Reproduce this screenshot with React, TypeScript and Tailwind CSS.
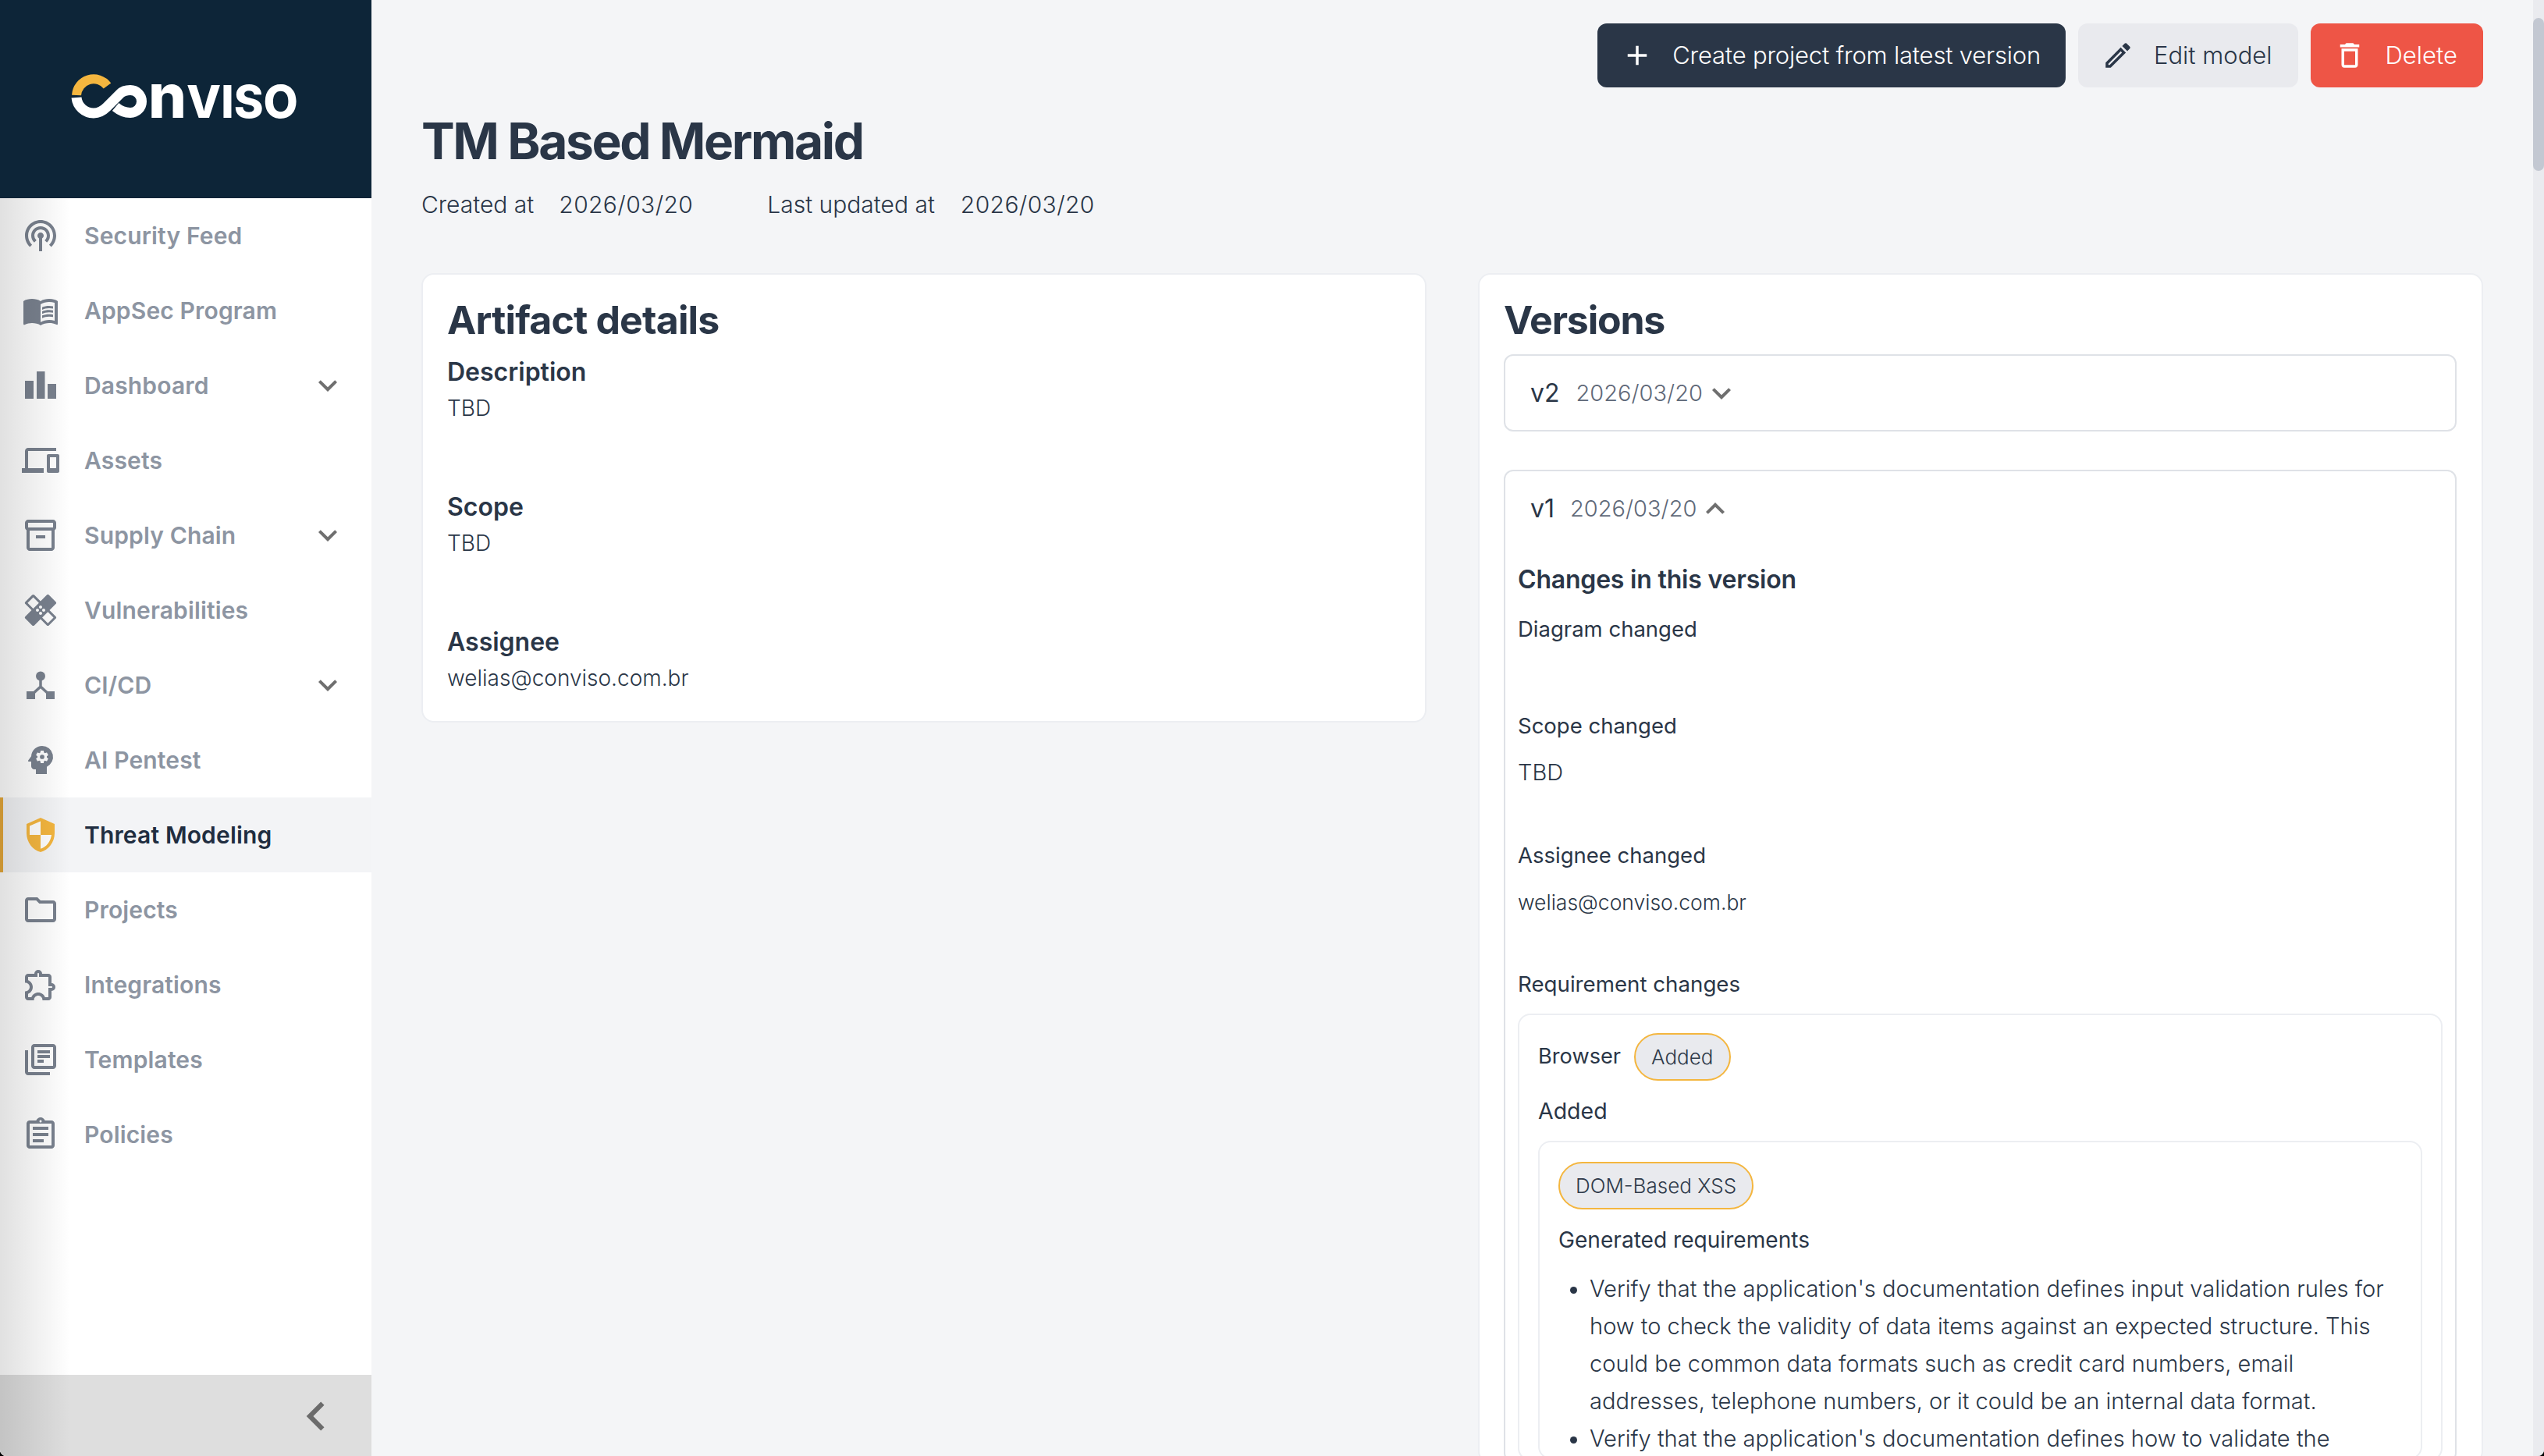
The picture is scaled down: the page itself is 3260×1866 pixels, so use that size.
import type { ReactNode } from 'react'
import {
  MdAdd, MdChevronLeft, MdExpandLess, MdExpandMore, MdHealing, MdMenuBook,
  MdOutlineAssignment, MdOutlineDelete, MdOutlineDevices, MdOutlineEdit,
  MdOutlineExtension, MdOutlineFolder, MdOutlineInventory2, MdOutlineLibraryBooks, MdPodcasts, MdPsychology,
} from 'react-icons/md'

function PipelineIcon() {
  return (
    <svg width={48} height={48} viewBox="0 0 48 48" fill="currentColor">
      <circle cx="24" cy="12.5" r="6" />
      <rect x="6" y="32" width="11" height="10" />
      <rect x="31" y="32" width="11" height="10" />
      <path d="M24 18v8M24 26 12 37M24 26l12 11" stroke="currentColor" strokeWidth="3.5" fill="none" />
    </svg>
  )
}

function BarsIcon() {
  return (
    <svg width={48} height={48} viewBox="0 0 48 48" fill="currentColor">
      <rect x="4" y="18" width="11" height="23" />
      <rect x="19" y="6" width="10.5" height="35" />
      <rect x="33" y="22" width="11" height="19" />
    </svg>
  )
}

function ShieldIcon() {
  return (
    <svg width={48} height={48} viewBox="0 0 24 24">
      <path d="M12 1 3 5v6c0 5.55 3.84 10.74 9 12 5.16-1.26 9-6.45 9-12V5z" fill="#fff" />
      <path
        d="M12 1 3 5v6c0 5.55 3.84 10.74 9 12 5.16-1.26 9-6.45 9-12V5l-9-4zm0 10.99h7c-.53 4.12-3.28 7.79-7 8.94V12H5V6.3l7-3.11v8.8z"
        fill="#f4b63f"
      />
    </svg>
  )
}

const NAV_ITEMS: { label: string; icon: ReactNode; caret?: boolean; active?: boolean }[] = [
  { label: 'Security Feed', icon: <MdPodcasts size={48} /> },
  { label: 'AppSec Program', icon: <MdMenuBook size={48} /> },
  { label: 'Dashboard', icon: <BarsIcon />, caret: true },
  { label: 'Assets', icon: <MdOutlineDevices size={48} /> },
  { label: 'Supply Chain', icon: <MdOutlineInventory2 size={48} />, caret: true },
  { label: 'Vulnerabilities', icon: <MdHealing size={48} /> },
  { label: 'CI/CD', icon: <PipelineIcon />, caret: true },
  { label: 'AI Pentest', icon: <MdPsychology size={48} /> },
  { label: 'Threat Modeling', icon: <ShieldIcon />, active: true },
  { label: 'Projects', icon: <MdOutlineFolder size={48} /> },
  { label: 'Integrations', icon: <MdOutlineExtension size={48} /> },
  { label: 'Templates', icon: <MdOutlineLibraryBooks size={48} /> },
  { label: 'Policies', icon: <MdOutlineAssignment size={48} /> },
]

function Logo() {
  return (
    <svg width={288} height={58} viewBox="0 0 288 58" className="overflow-visible" aria-label="Conviso">
      <path d="M6 28A22 22 0 0 1 45.5 16" stroke="#f4b63f" strokeWidth="12" fill="none" />
      <path
        d="M6 31A22 22 0 0 0 28 51C36 51 41 47 45 43L62 26C65 23 70 21.5 75 21.5A14.5 14.5 0 0 1 75 50.5C68 50.5 62 48 56 43"
        stroke="#fff"
        strokeWidth="13"
        fill="none"
      />
      <text x="98" y="57" fontFamily="Inter, sans-serif" fontWeight="800" fill="#fff" textLength="192" lengthAdjust="spacingAndGlyphs">
        <tspan fontSize="78">n</tspan>
        <tspan fontSize="58">VISO</tspan>
      </text>
    </svg>
  )
}

function Sidebar() {
  return (
    <aside className="flex h-full w-[476px] shrink-0 flex-col bg-white">
      <div className="flex h-[254px] shrink-0 items-center bg-[#0d2538] pb-[8px] pl-[92px]">
        <Logo />
      </div>
      <div className="relative flex flex-1 flex-col">
        <nav className="flex flex-1 flex-col">
          {NAV_ITEMS.map(item => (
            <div
              key={item.label}
              className={`flex h-[96px] items-center gap-[32px] border-l-4 pl-[24px] pr-[32px] ${
                item.active ? 'border-[#e5a83a] bg-[#f3f4f6]' : 'border-transparent'
              }`}
            >
              <span className="flex w-[48px] justify-center text-[#79818e]">{item.icon}</span>
              <span className={`flex-1 text-[30px] font-semibold tracking-[0.15px] ${item.active ? 'text-[#202d40]' : 'text-[#8d95a2]'}`}>
                {item.label}
              </span>
              {item.caret && <MdExpandMore size={48} className="text-[#6f6f6f]" />}
            </div>
          ))}
        </nav>
        <div className="flex h-[104px] shrink-0 items-center justify-end bg-[#dedede] pr-[34px] pt-[2px]">
          <MdChevronLeft size={74} className="text-[#6b6b6b]" />
        </div>
        <div className="pointer-events-none absolute inset-y-0 left-0 w-[90px] bg-gradient-to-r from-black/12 to-transparent" />
      </div>
    </aside>
  )
}

function Pill({ children }: { children: ReactNode }) {
  return (
    <span className="flex h-[61px] items-center rounded-full border-2 border-[#f4b63f] bg-[#e9eaee] px-[20px] text-[26px] font-light text-[#2f3a4a]">
      {children}
    </span>
  )
}

function Detail({ label, value }: { label: string; value: string }) {
  return (
    <div className="mb-[81px] last:mb-0">
      <div className="text-[32px] leading-[46px] font-semibold">{label}</div>
      <div className="text-[28px] leading-[46px] font-light">{value}</div>
    </div>
  )
}

export default function App() {
  return (
    <div className="h-[1866px] overflow-hidden bg-black text-[#2a3647] [font-family:Inter,sans-serif]">
      <div className="flex h-full overflow-hidden rounded-b-[8px] bg-[#f4f5f7]">
        <Sidebar />

        <main className="min-w-0 flex-1 px-[64px] pt-[30px]">
          <div className="flex justify-end gap-[16px]">
            <button className="flex h-[82px] items-center gap-[24px] rounded-[12px] bg-[#2a3647] pl-[30px] pr-[32px] text-[31px] font-light tracking-[-0.2px] text-white">
              <MdAdd size={42} />
              Create project from latest version
            </button>
            <button className="flex h-[82px] items-center gap-[25px] rounded-[12px] bg-[#e9eaee] pl-[30px] pr-[33px] text-[31px] font-light">
              <MdOutlineEdit size={42} />
              Edit model
            </button>
            <button className="flex h-[82px] items-center gap-[25px] rounded-[12px] bg-[#ee5546] pl-[29px] pr-[33px] text-[31px] font-light text-white">
              <MdOutlineDelete size={42} />
              Delete
            </button>
          </div>

          <h1 className="mt-[33px] text-[64px] leading-[72px] font-bold tracking-[-2.4px]">TM Based Mermaid</h1>

          <div className="mt-[21px] flex text-[30px] leading-[48px] font-light">
            <span>Created at</span>
            <span className="ml-[32px] tracking-[0.4px]">2026/03/20</span>
            <span className="ml-[95px]">Last updated at</span>
            <span className="ml-[33px] tracking-[0.4px]">2026/03/20</span>
          </div>

          <div className="mt-[64px] grid grid-cols-2 items-start gap-[66px]">
            <section className="rounded-[16px] border-2 border-[#eceef2] bg-white px-[31px] pt-[24px] pb-[32px]">
              <h2 className="mb-[10px] text-[50px] leading-[68px] font-bold tracking-[-0.85px]">Artifact details</h2>
              <Detail label="Description" value="TBD" />
              <Detail label="Scope" value="TBD" />
              <Detail label="Assignee" value="welias@conviso.com.br" />
            </section>

            <section className="rounded-[16px] border-2 border-[#eceef2] bg-white pl-[31px] pr-[32px] pt-[24px]">
              <h2 className="text-[50px] leading-[68px] font-bold tracking-[-1.2px]">Versions</h2>

              <div className="mt-[10px] flex h-[99px] items-center gap-[21px] rounded-[12px] border-2 border-[#dfe2e7] pl-[32px]">
                <span className="text-[32px] font-normal">v2</span>
                <span className="flex items-center text-[29px] font-light text-[#5f6979]">
                  2026/03/20
                  <MdExpandMore size={48} className="text-[#6f6f6f]" />
                </span>
              </div>

              <div className="mt-[49px] rounded-[12px] border-2 border-[#dfe2e7] px-[16px]">
                <div className="flex h-[96px] items-center gap-[20px] pl-[16px]">
                  <span className="text-[32px] font-normal">v1</span>
                  <span className="flex items-center text-[29px] font-light text-[#5f6979]">
                    2026/03/20
                    <MdExpandLess size={48} className="text-[#6f6f6f]" />
                  </span>
                </div>

                <h3 className="mt-[20px] text-[32px] leading-[46px] font-semibold tracking-[-0.2px]">Changes in this version</h3>
                <div className="mt-[18px] text-[27.5px] leading-[44px]">Diagram changed</div>
                <div className="mt-[80px] text-[27.5px] leading-[44px]">Scope changed</div>
                <div className="mt-[16px] text-[29px] leading-[44px] font-light">TBD</div>
                <div className="mt-[62px] text-[27.5px] leading-[44px]">Assignee changed</div>
                <div className="mt-[16px] text-[26.5px] leading-[44px] font-light">welias@conviso.com.br</div>
                <div className="mt-[61px] text-[27.7px] leading-[44px]">Requirement changes</div>

                <div className="mt-[16px] rounded-[16px] border-2 border-[#eceef2] px-[24px] pt-[23px]">
                  <div className="flex items-center gap-[17px]">
                    <span className="text-[27.2px]">Browser</span>
                    <Pill>Added</Pill>
                  </div>
                  <div className="mt-[17px] text-[28.5px] leading-[44px]">Added</div>

                  <div className="mt-[16px] rounded-[16px] border-2 border-[#eceef2] px-[24px] pt-[25px]">
                    <div className="flex">
                      <Pill>DOM-Based XSS</Pill>
                    </div>
                    <div className="mt-[17px] text-[28.1px] leading-[44px]">Generated requirements</div>
                    <ul className="mt-[17px] list-disc pl-[40px] text-[29.1px] leading-[48px] font-light whitespace-nowrap">
                      <li>
                        Verify that the application's documentation defines input validation rules for
                        <br />
                        how to check the validity of data items against an expected structure. This
                        <br />
                        could be common data formats such as credit card numbers, email
                        <br />
                        addresses, telephone numbers, or it could be an internal data format.
                      </li>
                      <li>
                        Verify that the application's documentation defines how to validate the
                      </li>
                    </ul>
                  </div>
                </div>
              </div>
            </section>
          </div>
        </main>

        <div className="h-full w-[14px] shrink-0 bg-[#eaebef] pt-[23px]">
          <div className="h-[196px] rounded-full bg-[#c3c8d2]" />
        </div>
      </div>
    </div>
  )
}
